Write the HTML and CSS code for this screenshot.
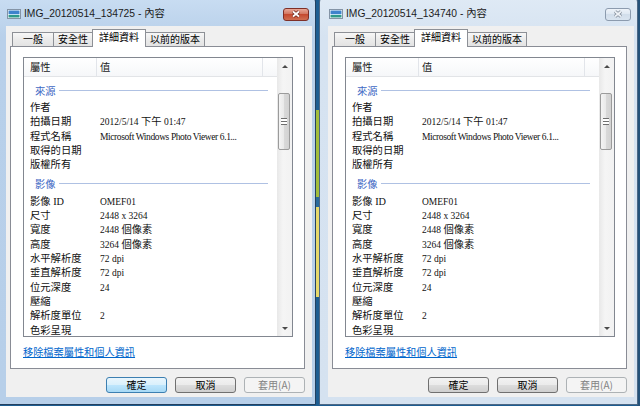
FILE: index.html
```html
<!DOCTYPE html>
<html lang="zh-Hant">
<head>
    <meta charset="UTF-8">
    <title>內容</title>
    <link rel="stylesheet" href="styles.css">
</head>
<body>
<div class="desktop">

    <div class="window">
        <div class="titlebar">
            <svg class="title-icon" width="14" height="10" viewBox="0 0 14 10">
                <rect x="0.5" y="0.5" width="13" height="9" fill="#fff" stroke="#8494a6"/>
                <rect x="1.5" y="1.5" width="11" height="3.5" fill="#3f83cc"/>
                <rect x="1.5" y="5" width="11" height="1" fill="#bfe0f2"/>
                <rect x="1.5" y="6" width="11" height="2.5" fill="#2f9a8a"/>
            </svg>
            <div class="title-text">IMG_20120514_134725 - 內容</div>
            <div class="close-btn">
                <svg width="10" height="8" viewBox="0 0 10 8">
                    <path d="M2 1.5 L8 6.5 M8 1.5 L2 6.5" stroke="#6a2418" stroke-width="3.4"/>
                    <path d="M2 1.5 L8 6.5 M8 1.5 L2 6.5" stroke="#fff" stroke-width="1.8"/>
                </svg>
            </div>
        </div>
        <div class="dialog">
            <div class="tabs">
                <div class="tab first">一般</div>
                <div class="tab">安全性</div>
                <div class="tab selected">詳細資料</div>
                <div class="tab">以前的版本</div>
            </div>
            <div class="panel">
                <div class="listview">
                    <div class="lv-main">
                        <div class="lv-header">
                            <div class="lv-col name">屬性</div>
                            <div class="lv-col value">值</div>
                            <div class="lv-col spare"></div>
                        </div>
                        <div class="lv-body">
                            <div class="group"><span>來源</span><i class="group-line"></i></div>
                            <div class="row"><span class="label">作者</span><span class="val"></span></div>
                            <div class="row"><span class="label">拍攝日期</span><span class="val">2012/5/14 <span class="cjk">下午</span> 01:47</span></div>
                            <div class="row"><span class="label">程式名稱</span><span class="val narrow">Microsoft Windows Photo Viewer 6.1...</span></div>
                            <div class="row"><span class="label">取得的日期</span><span class="val"></span></div>
                            <div class="row"><span class="label">版權所有</span><span class="val"></span></div>
                            <div class="group"><span>影像</span><i class="group-line"></i></div>
                            <div class="row"><span class="label">影像 ID</span><span class="val">OMEF01</span></div>
                            <div class="row"><span class="label">尺寸</span><span class="val">2448 x 3264</span></div>
                            <div class="row"><span class="label">寬度</span><span class="val">2448 <span class="cjk">個像素</span></span></div>
                            <div class="row"><span class="label">高度</span><span class="val">3264 <span class="cjk">個像素</span></span></div>
                            <div class="row"><span class="label">水平解析度</span><span class="val">72 dpi</span></div>
                            <div class="row"><span class="label">垂直解析度</span><span class="val">72 dpi</span></div>
                            <div class="row"><span class="label">位元深度</span><span class="val">24</span></div>
                            <div class="row"><span class="label">壓縮</span><span class="val"></span></div>
                            <div class="row"><span class="label">解析度單位</span><span class="val">2</span></div>
                            <div class="row"><span class="label">色彩呈現</span><span class="val"></span></div>
                        </div>
                    </div>
                    <div class="scrollbar">
                        <div class="sb-btn up"></div>
                        <div class="sb-track"><div class="sb-thumb"><i></i></div></div>
                        <div class="sb-btn down"></div>
                    </div>
                </div>
                <a class="link" href="#">移除檔案屬性和個人資訊</a>
            </div>
            <div class="buttons">
                <div class="btn default">確定</div>
                <div class="btn">取消</div>
                <div class="btn disabled">套用(A)</div>
            </div>
        </div>
    </div>

    <div class="window inactive">
        <div class="titlebar">
            <svg class="title-icon" width="14" height="10" viewBox="0 0 14 10">
                <rect x="0.5" y="0.5" width="13" height="9" fill="#fff" stroke="#8494a6"/>
                <rect x="1.5" y="1.5" width="11" height="3.5" fill="#3f83cc"/>
                <rect x="1.5" y="5" width="11" height="1" fill="#bfe0f2"/>
                <rect x="1.5" y="6" width="11" height="2.5" fill="#2f9a8a"/>
            </svg>
            <div class="title-text">IMG_20120514_134740 - 內容</div>
            <div class="close-btn">
                <svg width="10" height="8" viewBox="0 0 10 8">
                    <path d="M2 1.5 L8 6.5 M8 1.5 L2 6.5" stroke="#7d8896" stroke-width="3.4"/>
                    <path d="M2 1.5 L8 6.5 M8 1.5 L2 6.5" stroke="#eef2f7" stroke-width="1.8"/>
                </svg>
            </div>
        </div>
        <div class="dialog">
            <div class="tabs">
                <div class="tab first">一般</div>
                <div class="tab">安全性</div>
                <div class="tab selected">詳細資料</div>
                <div class="tab">以前的版本</div>
            </div>
            <div class="panel">
                <div class="listview">
                    <div class="lv-main">
                        <div class="lv-header">
                            <div class="lv-col name">屬性</div>
                            <div class="lv-col value">值</div>
                            <div class="lv-col spare"></div>
                        </div>
                        <div class="lv-body">
                            <div class="group"><span>來源</span><i class="group-line"></i></div>
                            <div class="row"><span class="label">作者</span><span class="val"></span></div>
                            <div class="row"><span class="label">拍攝日期</span><span class="val">2012/5/14 <span class="cjk">下午</span> 01:47</span></div>
                            <div class="row"><span class="label">程式名稱</span><span class="val narrow">Microsoft Windows Photo Viewer 6.1...</span></div>
                            <div class="row"><span class="label">取得的日期</span><span class="val"></span></div>
                            <div class="row"><span class="label">版權所有</span><span class="val"></span></div>
                            <div class="group"><span>影像</span><i class="group-line"></i></div>
                            <div class="row"><span class="label">影像 ID</span><span class="val">OMEF01</span></div>
                            <div class="row"><span class="label">尺寸</span><span class="val">2448 x 3264</span></div>
                            <div class="row"><span class="label">寬度</span><span class="val">2448 <span class="cjk">個像素</span></span></div>
                            <div class="row"><span class="label">高度</span><span class="val">3264 <span class="cjk">個像素</span></span></div>
                            <div class="row"><span class="label">水平解析度</span><span class="val">72 dpi</span></div>
                            <div class="row"><span class="label">垂直解析度</span><span class="val">72 dpi</span></div>
                            <div class="row"><span class="label">位元深度</span><span class="val">24</span></div>
                            <div class="row"><span class="label">壓縮</span><span class="val"></span></div>
                            <div class="row"><span class="label">解析度單位</span><span class="val">2</span></div>
                            <div class="row"><span class="label">色彩呈現</span><span class="val"></span></div>
                        </div>
                    </div>
                    <div class="scrollbar">
                        <div class="sb-btn up"></div>
                        <div class="sb-track"><div class="sb-thumb"><i></i></div></div>
                        <div class="sb-btn down"></div>
                    </div>
                </div>
                <a class="link" href="#">移除檔案屬性和個人資訊</a>
            </div>
            <div class="buttons">
                <div class="btn">確定</div>
                <div class="btn">取消</div>
                <div class="btn disabled">套用(A)</div>
            </div>
        </div>
    </div>

</div>
</body>
</html>
```

FILE: styles.css
```css
* {
    box-sizing: border-box;
    margin: 0;
    padding: 0;
}

body {
    width: 640px;
    height: 406px;
    overflow: hidden;
    font-family: "Noto Sans CJK TC", sans-serif;
    /* desktop wallpaper showing between and beside the two windows */
    background:
        linear-gradient(to left, #24527a 0 3px, transparent 3px),
        linear-gradient(#1d5d91 0 110px, #a3bd3c 110px 197px, #2a6a9c 197px 207px, #e6d86a 207px 297px, #1d5d91 297px);
}

.desktop {
    display: flex;
    gap: 3px;
    margin: -4px 0 0 -3px;
}

/* Window frame */
.window {
    width: 319px;
    height: 409px;
    display: flex;
    flex-direction: column;
    padding: 0 3px 7px 8px;
    border: 1px solid #23405f;
    border-radius: 6px 6px 0 0;
    background: linear-gradient(#c9ddf2, #b8d0ea 40px, #b7cfe9);
}

.window.inactive {
    border-color: #4d6885;
    background: linear-gradient(#dfeaf5, #d6e3f1 40px, #d5e2f0);
}

.titlebar {
    height: 29px;
    padding-top: 5px;
    display: flex;
    align-items: center;
}

.title-icon {
    margin-left: 1px;
}

.title-text {
    flex: 1;
    margin-left: 3px;
    font-family: "Liberation Sans", "Noto Sans CJK TC", sans-serif;
    font-size: 10.3px;
    line-height: 12px;
    color: #1b1b1b;
}

.close-btn {
    width: 26px;
    height: 13px;
    margin-right: 3px;
    display: flex;
    align-items: center;
    justify-content: center;
    border: 1px solid #7e2f27;
    border-radius: 3px;
    background: linear-gradient(#e9a898, #d27660 45%, #c54a30 50%, #cf6f52);
}

.inactive .close-btn {
    border-color: #8c9bae;
    background: linear-gradient(#eef3f9, #dde7f2 50%, #d2deeb 50%, #d9e4f0);
}

/* Dialog client area */
.dialog {
    flex: 1;
    display: flex;
    flex-direction: column;
    padding: 3px 7px 4px 4px;
    background: #f0f0f0;
}

.tabs {
    height: 17px;
    margin-left: 2px;
    display: flex;
    align-items: flex-end;
    position: relative;
    z-index: 1;
}

.tab {
    height: 14px;
    padding: 0 4px;
    margin-right: -1px;
    border: 1px solid #8d9096;
    border-bottom: none;
    background: linear-gradient(#f7f7f7, #ebebeb 50%, #e3e3e3);
    font-size: 10px;
    line-height: 12px;
    text-align: center;
    color: #000;
}

.tab.first {
    width: 42px;
}

.tab.selected {
    height: 18px;
    margin-bottom: -1px;
    padding: 1px 6px 0;
    background: #fff;
    position: relative;
    z-index: 1;
}

.panel {
    height: 323px;
    display: flex;
    flex-direction: column;
    padding: 10px 11px 0 12px;
    border: 1px solid #898c95;
    background: #fff;
}

/* List view */
.listview {
    height: 280px;
    display: flex;
    border: 1px solid #828790;
}

.lv-main {
    flex: 1;
    display: flex;
    flex-direction: column;
    overflow: hidden;
}

.lv-header {
    height: 19px;
    flex-shrink: 0;
    display: flex;
    border-bottom: 1px solid #e2e4e7;
    background: linear-gradient(#fff, #f6f7f9);
}

.lv-col {
    padding-left: 6px;
    border-right: 1px solid #e2e5ea;
    font-size: 10.3px;
    line-height: 18px;
    color: #1a1a1a;
}

.lv-col.name {
    width: 73px;
}

.lv-col.value {
    flex: 1;
    padding-left: 3px;
}

.lv-col.spare {
    width: 14px;
    border-right: none;
}

.lv-body {
    padding-top: 2px;
    font-family: "Liberation Serif", "Noto Sans CJK TC", serif;
}

.group {
    height: 22px;
    display: flex;
    align-items: center;
    padding: 0 9px 0 11px;
    font-family: "Noto Sans CJK TC", sans-serif;
    font-size: 10.3px;
    color: #4168c4;
}

.group-line {
    flex: 1;
    height: 1px;
    margin-left: 3px;
    background: #afc1e3;
}

.row {
    height: 14.33px;
    display: grid;
    grid-template-columns: 73px 1fr;
    line-height: 14.33px;
    color: #111;
    white-space: nowrap;
}

.label {
    padding-left: 6px;
    font-size: 10.3px;
}

.val {
    padding-left: 3px;
    font-size: 9.5px;
}

.val .cjk {
    font-size: 10.3px;
}

.val.narrow {
    letter-spacing: -0.4px;
}

/* Scroll bar */
.scrollbar {
    width: 15px;
    display: flex;
    flex-direction: column;
    background: linear-gradient(to right, #e8e8e8, #f5f5f5 40%, #f2f2f2);
}

.sb-btn {
    height: 16px;
    display: flex;
    align-items: center;
    justify-content: center;
}

.sb-btn.up::after {
    content: "";
    border-left: 3px solid transparent;
    border-right: 3px solid transparent;
    border-bottom: 3px solid #4a4a4a;
}

.sb-btn.down::after {
    content: "";
    border-left: 3px solid transparent;
    border-right: 3px solid transparent;
    border-top: 3px solid #4a4a4a;
}

.sb-track {
    flex: 1;
    padding: 19px 2px 0 1px;
}

.sb-thumb {
    height: 57px;
    display: flex;
    align-items: center;
    justify-content: center;
    border: 1px solid #9b9b9b;
    border-radius: 2px;
    background: linear-gradient(to right, #f4f4f4, #e9e9e9 50%, #d9d9d9 50%, #d2d2d2);
}

.sb-thumb i {
    width: 6px;
    height: 7px;
    border-top: 1px solid #6f6f6f;
    border-bottom: 1px solid #6f6f6f;
    background: linear-gradient(#fff 0 2px, #6f6f6f 2px 3px, #fff 3px);
}

.link {
    margin-top: 9px;
    align-self: flex-start;
    font-size: 10.2px;
    line-height: 12px;
    color: #0066cc;
    text-decoration: underline;
}

/* Buttons */
.buttons {
    height: 16px;
    margin-top: 8px;
    display: flex;
    justify-content: flex-end;
    gap: 8px;
}

.btn {
    width: 61px;
    border: 1px solid #707070;
    border-radius: 3px;
    background: linear-gradient(#f2f2f2, #ebebeb 49%, #dddddd 50%, #cfcfcf);
    font-size: 10px;
    line-height: 14px;
    text-align: center;
    color: #000;
}

.btn.default {
    border-color: #3c7fb1;
    background: linear-gradient(#eaf6fd, #d9f0fc 49%, #bee6fd 50%, #a7d9f5);
}

.btn.disabled {
    border-color: #adb2b5;
    background: #f4f4f4;
    color: #838383;
}
```
